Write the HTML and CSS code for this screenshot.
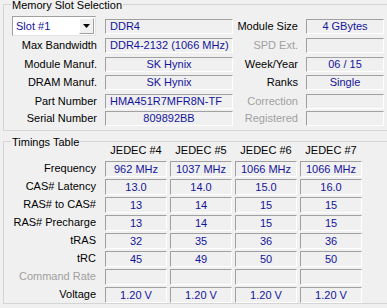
FILE: index.html
```html
<!DOCTYPE html>
<html lang="en">
<head>
    <meta charset="UTF-8">
    <title>SPD</title>
    <link rel="stylesheet" href="styles.css">
</head>
<body>
    <div class="group slot-group">
        <div class="group-title">Memory Slot Selection</div>
        <div class="slot-grid">
            <div class="select">
                <span class="select-text">Slot #1</span>
                <span class="drop">
                    <svg width="7" height="4" viewBox="0 0 7 4"><path d="M0 0H7L3.5 4Z" fill="#000"/></svg>
                </span>
            </div>
            <div class="field left first">DDR4</div>
            <div class="label first">Module Size</div>
            <div class="field first">4 GBytes</div>

            <div class="label">Max Bandwidth</div>
            <div class="field left">DDR4-2132 (1066 MHz)</div>
            <div class="label off">SPD Ext.</div>
            <div class="field"></div>

            <div class="label">Module Manuf.</div>
            <div class="field">SK Hynix</div>
            <div class="label">Week/Year</div>
            <div class="field">06 / 15</div>

            <div class="label">DRAM Manuf.</div>
            <div class="field">SK Hynix</div>
            <div class="label">Ranks</div>
            <div class="field">Single</div>

            <div class="label">Part Number</div>
            <div class="field left">HMA451R7MFR8N-TF</div>
            <div class="label off">Correction</div>
            <div class="field"></div>

            <div class="label">Serial Number</div>
            <div class="field">809892BB</div>
            <div class="label off">Registered</div>
            <div class="field"></div>
        </div>
    </div>

    <div class="group timing-group">
        <div class="group-title">Timings Table</div>
        <div class="timing-grid">
            <div></div>
            <div class="head">JEDEC #4</div>
            <div class="head">JEDEC #5</div>
            <div class="head">JEDEC #6</div>
            <div class="head">JEDEC #7</div>

            <div class="label">Frequency</div>
            <div class="field">962 MHz</div>
            <div class="field">1037 MHz</div>
            <div class="field">1066 MHz</div>
            <div class="field">1066 MHz</div>

            <div class="label">CAS# Latency</div>
            <div class="field">13.0</div>
            <div class="field">14.0</div>
            <div class="field">15.0</div>
            <div class="field">16.0</div>

            <div class="label">RAS# to CAS#</div>
            <div class="field">13</div>
            <div class="field">14</div>
            <div class="field">15</div>
            <div class="field">15</div>

            <div class="label">RAS# Precharge</div>
            <div class="field">13</div>
            <div class="field">14</div>
            <div class="field">15</div>
            <div class="field">15</div>

            <div class="label">tRAS</div>
            <div class="field">32</div>
            <div class="field">35</div>
            <div class="field">36</div>
            <div class="field">36</div>

            <div class="label">tRC</div>
            <div class="field">45</div>
            <div class="field">49</div>
            <div class="field">50</div>
            <div class="field">50</div>

            <div class="label off">Command Rate</div>
            <div class="field"></div>
            <div class="field"></div>
            <div class="field"></div>
            <div class="field"></div>

            <div class="label">Voltage</div>
            <div class="field">1.20 V</div>
            <div class="field">1.20 V</div>
            <div class="field">1.20 V</div>
            <div class="field">1.20 V</div>
        </div>
    </div>
</body>
</html>
```

FILE: styles.css
```css
body {
    margin: 0;
    width: 387px;
    height: 308px;
    overflow: hidden;
    background-color: #f0f0f0;
    font-family: "Liberation Sans", Arial, sans-serif;
    font-size: 11px;
    color: #000;
}
.group {
    position: relative;
    box-sizing: border-box;
    width: 384px;
    margin-left: 3px;
    border: 1px solid #d5d5d5;
    border-right: none;
    padding-left: 8px;
}
.group-title {
    position: absolute;
    top: -6px;
    left: 7px;
    padding: 0 1px;
    line-height: 12px;
    background-color: #f0f0f0;
}
.slot-group {
    margin-top: 4px;
    height: 127px;
    padding-top: 11px;
}
.timing-group {
    margin-top: 10px;
    height: 163px;
    padding-top: 1px;
}
.slot-grid {
    display: grid;
    grid-template-columns: 93px 128px 73px 78px;
    grid-template-rows: 22px 19px 18px 19px 17px 15px;
    align-items: start;
}
.timing-grid {
    display: grid;
    grid-template-columns: 90px repeat(4, 62px);
    grid-auto-rows: 16px;
    column-gap: 3px;
    row-gap: 2px;
}
.timing-grid > .head {
    height: 14px;
    line-height: 14px;
    text-align: center;
}
.timing-grid > div:nth-child(-n+5) {
    height: 14px;
}
.timing-grid .label {
    padding-right: 6px;
}
.label {
    height: 15px;
    line-height: 15px;
    text-align: right;
    padding-right: 8px;
    white-space: nowrap;
}
.label.off {
    color: #a0a0a0;
}
.field {
    box-sizing: border-box;
    height: 15px;
    line-height: 13px;
    border: 1px solid;
    border-color: #a0a0a0 #ffffff #ffffff #a0a0a0;
    color: #14149a;
    text-align: center;
    white-space: nowrap;
    overflow: hidden;
}
.timing-grid .field {
    height: 16px;
    line-height: 14px;
}
.field.left {
    text-align: left;
    padding-left: 4px;
}
.first {
    margin-top: 3px;
}
.select {
    box-sizing: border-box;
    width: 84px;
    height: 20px;
    display: flex;
    align-items: center;
    justify-content: space-between;
    background-color: #ffffff;
    border: 1px solid;
    border-color: #a0a0a0 #e3e3e3 #e3e3e3 #a0a0a0;
    padding: 0 1px 0 3px;
}
.select-text {
    color: #14149a;
}
.drop {
    box-sizing: border-box;
    width: 15px;
    height: 16px;
    display: flex;
    align-items: center;
    justify-content: center;
    background-color: #f0f0f0;
    border: 1px solid;
    border-color: #ffffff #a0a0a0 #a0a0a0 #ffffff;
}
```
